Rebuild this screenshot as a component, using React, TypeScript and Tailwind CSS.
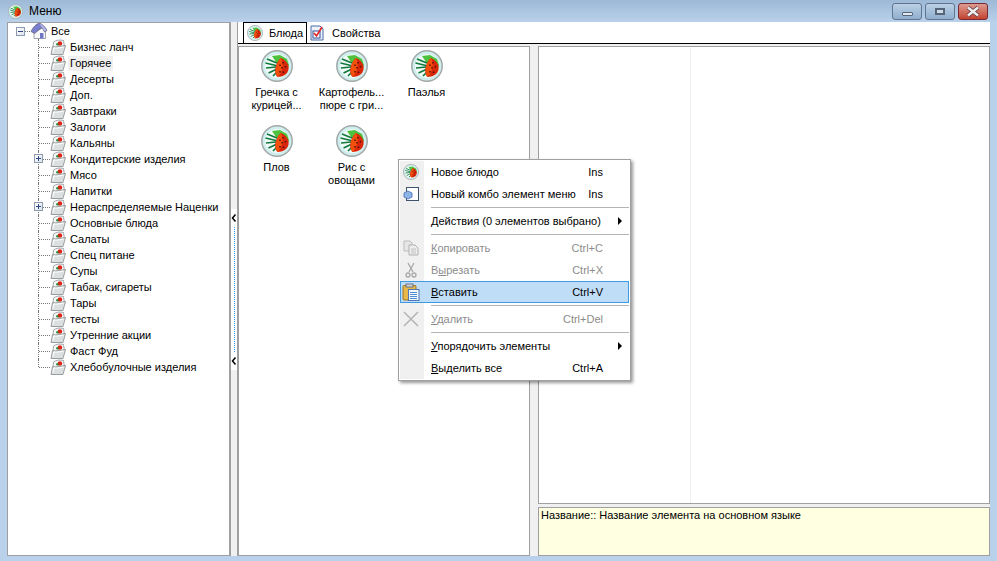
import React from 'react';

const treeItems = [
  { label: 'Бизнес ланч' },
  { label: 'Горячее', hovered: true },
  { label: 'Десерты' },
  { label: 'Доп.' },
  { label: 'Завтраки' },
  { label: 'Залоги' },
  { label: 'Кальяны' },
  { label: 'Кондитерские изделия', expandable: true },
  { label: 'Мясо' },
  { label: 'Напитки' },
  { label: 'Нераспределяемые Наценки', expandable: true },
  { label: 'Основные блюда' },
  { label: 'Салаты' },
  { label: 'Спец питане' },
  { label: 'Супы' },
  { label: 'Табак, сигареты' },
  { label: 'Тары' },
  { label: 'тесты' },
  { label: 'Утренние акции' },
  { label: 'Фаст Фуд' },
  { label: 'Хлебобулочные изделия' },
];

const dishes = [
  ['Гречка с', 'курицей...'],
  ['Картофель...', 'пюре с гри...'],
  ['Паэлья'],
  ['Плов'],
  ['Рис с', 'овощами'],
];

const PlateIcon = ({ size = 32 }: { size?: number }) => (
  <svg width={size} height={size} viewBox="0 0 32 32" className="shrink-0">
    <circle cx="16" cy="16" r="15.2" fill="#cfeeee" stroke="#a3a8a8" strokeWidth="1.5" />
    <circle cx="16" cy="16" r="12" fill="#f1faf9" />
    <path d="M11 6 L19 5 L26 9 L28 15 L26 20 L17 15 Z" fill="#4ec23f" />
    <path d="M6 9 L16 13 M4.5 13 L15 15.5 M5 18 L15 17 M7.5 23 L16 19 M12 26 L17 21" stroke="#0f7a3a" strokeWidth="1.7" />
    <path d="M20 8 C27 11 29 17 27 21 C25.5 25 22 26.5 16.5 27 C12.5 23 14 13 20 8 Z" fill="#d9260b" />
    <path d="M20 8 C23 13 22 22 16.5 27 C13 23.5 14.5 13 20 8 Z" fill="#f4500c" />
    <path d="M22 12 v1.4 M24.5 16 v1.4 M21 17 v1.4 M22.5 21.5 v1.4 M19 21 v1.4 M19 14.5 v1.4" stroke="#4a0f06" strokeWidth="1.4" />
  </svg>
);

const FolderIcon = () => (
  <svg width="16" height="16" viewBox="0 0 16 16" className="shrink-0">
    <path d="M2.5 12 L3.5 3 C6 1 10.5 0.5 13.5 1.5 L14.5 8 L12 12 Z" fill="#f7f8f8" stroke="#8c9094" strokeWidth="0.8" />
    <path d="M5.5 5 L9 3 V6.5 Z" fill="#2c9a3a" />
    <circle cx="10" cy="4.5" r="2.2" fill="#e0241a" />
    <path d="M6 5.8 H9" stroke="#1f7a30" strokeWidth="0.9" />
    <path d="M1 15.5 L2.5 7.5 C6 8.5 10 7.2 15.5 6.5 L13 15.5 Z" fill="#dcdfe0" stroke="#85898c" strokeWidth="0.8" />
    <path d="M3 13.5 L3.8 9 C7 9.6 10 8.6 13.6 8.1" fill="none" stroke="#ffffff" strokeWidth="1" />
  </svg>
);

const HomeIcon = () => (
  <svg width="18" height="18" viewBox="0 0 18 18" className="shrink-0">
    <path d="M4 9 L13 6 L15.5 9 V16.5 H4 Z" fill="#f8f8fb" stroke="#8a8a92" strokeWidth="0.8" />
    <path d="M1 9.5 C3 5 6 2 9.5 1 C12.5 2.5 15.5 5 17 8.5 L14.5 10 L12 5.5 L4.5 11.5 Z" fill="#7a80cf" stroke="#5f5f70" strokeWidth="0.7" />
    <path d="M9.5 1.5 C12.5 3 15 5.5 16.5 8.3 L14.7 9.4 L11.8 5.2 Z" fill="#b4b8ea" />
    <path d="M10 11 H13.5 V16.5 H10 Z" fill="#6f76c6" />
  </svg>
);

const TreeToggle = ({ minus }: { minus?: boolean }) => (
  <div className="flex h-[9px] w-[9px] items-center justify-center border border-[#8a9bb0] bg-gradient-to-br from-white to-[#dfe3ea]">
    <div className="relative h-px w-[5px] bg-[#30468c]">
      {!minus && <div className="absolute left-[2px] top-[-2px] h-[5px] w-px bg-[#30468c]" />}
    </div>
  </div>
);

const TreeRow = ({ label, hovered, expandable, last }: { label: string; hovered?: boolean; expandable?: boolean; last?: boolean }) => (
  <div className="flex h-4 items-center">
    <div className={`ml-[30px] w-px border-l border-dotted border-[#777] ${last ? 'h-2 self-start' : 'h-full'}`} />
    <div className="relative flex h-full w-[11px] items-center">
      <div className="w-full border-t border-dotted border-[#777]" />
      {expandable && (
        <div className="absolute left-[-5px] top-[3px]">
          <TreeToggle />
        </div>
      )}
    </div>
    <FolderIcon />
    <span className={`ml-[2px] whitespace-nowrap px-[2px] leading-[15px] ${hovered ? 'bg-[#f0f0f0]' : ''}`}>{label}</span>
  </div>
);

const TreePanel = () => (
  <div className="w-[223px] shrink-0 border border-[#a0a0a0] bg-white">
    <div className="flex h-4 items-center">
      <div className="ml-2">
        <TreeToggle minus />
      </div>
      <div className="w-[5px] border-t border-dotted border-[#777]" />
      <HomeIcon />
      <span className="ml-px px-[2px]">Все</span>
    </div>
    {treeItems.map((item, i) => (
      <TreeRow key={item.label} {...item} last={i === treeItems.length - 1} />
    ))}
  </div>
);

const SplitArrow = () => (
  <svg width="6" height="8" viewBox="0 0 6 8" className="my-[5px] shrink-0">
    <path d="M4.5 0.5 L1.5 4 L4.5 7.5" fill="none" stroke="#000" strokeWidth="1.5" />
  </svg>
);

const Splitter = () => (
  <div className="flex w-2 shrink-0 flex-col border-x border-[#a0a0a0] bg-[#f0f0f0] pt-[187px]">
    <div className="flex h-[161px] flex-col items-center bg-white">
      <SplitArrow />
      <div className="flex-1 self-start ml-[3px] border-l border-dotted border-[#3399ff]" />
      <SplitArrow />
    </div>
  </div>
);

const TabBar = () => (
  <div className="flex h-[22px] items-end border-b border-black bg-white pl-[5px]">
    <div className="flex h-[21px] w-[64px] items-center gap-[6px] border-x border-t border-black bg-white pl-[3px]">
      <PlateIcon size={16} />
      <span className="pt-px">Блюда</span>
    </div>
    <div className="ml-[2px] flex h-[21px] items-center gap-2 pl-px">
      <svg width="14" height="16" viewBox="0 0 14 16">
        <path d="M1 1 H10 L13 4 V15 H1 Z" fill="#eef3fb" stroke="#4a6aa8" />
        <rect x="3" y="6" width="7" height="7" fill="#fff" stroke="#2f4f95" />
        <path d="M4 8 L6.5 11 L12 2" fill="none" stroke="#e02020" strokeWidth="1.6" />
      </svg>
      <span className="pt-px">Свойства</span>
    </div>
  </div>
);

const DishGrid = () => (
  <div className="flex-1 border border-[#a0a0a0] bg-white">
    <div className="grid grid-cols-[repeat(3,75px)] auto-rows-[75px] pt-[3px]">
      {dishes.map((lines) => (
        <div key={lines[0]} className="flex flex-col items-center">
          <PlateIcon />
          <div className="mt-[4px] text-center leading-[13px]">
            {lines.map((line) => (
              <div key={line} className="whitespace-nowrap">{line}</div>
            ))}
          </div>
        </div>
      ))}
    </div>
  </div>
);

const PropertyPanel = () => (
  <div className="flex min-w-0 flex-1 flex-col">
    <div className="flex flex-1 border border-[#a0a0a0] bg-white">
      <div className="w-[152px] border-r border-[#f0f0f0]" />
    </div>
    <div className="mt-[3px] h-[49px] shrink-0 border border-[#a0a0a0] bg-[#ffffe1] pl-[2px] leading-[15px]">
      Название:: Название элемента на основном языке
    </div>
  </div>
);

const ContextMenu = () => {
  const Item = ({ label, shortcut, icon, disabled, active, arrow }: { label: React.ReactNode; shortcut?: string; icon?: React.ReactNode; disabled?: boolean; active?: boolean; arrow?: boolean }) => (
    <div className={`flex h-[22px] items-center border ${active ? 'border-[#3d9ae0] bg-[#c0ddf8]' : 'border-transparent'} ${disabled ? 'text-[#8c8c8c]' : ''}`}>
      <div className="flex w-[20px] shrink-0 justify-center">{icon}</div>
      <span className="ml-[10px] flex-1 whitespace-nowrap">{label}</span>
      {shortcut && <span className="whitespace-nowrap">{shortcut}</span>}
      <div className="flex w-[25px] shrink-0 justify-end pr-[6px]">
        {arrow && <div className="h-0 w-0 border-y-[4px] border-l-[4px] border-y-transparent border-l-black" />}
      </div>
    </div>
  );
  const Sep = () => (
    <div className="flex h-[5px] items-center pl-[31px]">
      <div className="w-full border-t border-[#b4b4b4]" />
    </div>
  );
  return (
    <div className="absolute left-[398px] top-[159px] w-[233px] border border-[#a0a0a0] bg-white p-px shadow-[2px_2px_3px_rgba(0,0,0,0.4)]">
      <div className="absolute bottom-px left-px top-px w-[24px] bg-[#f0f0f0]" />
      <div className="relative">
        <Item label="Новое блюдо" shortcut="Ins" icon={<PlateIcon size={16} />} />
        <Item
          label="Новый комбо элемент меню"
          shortcut="Ins"
          icon={
            <svg width="16" height="16" viewBox="0 0 16 16">
              <rect x="3.5" y="1.5" width="12" height="13" fill="#fff" stroke="#40536b" />
              <path d="M5 5 L9 7 V11 L5 13 L1 11 V7 Z" fill="#8fb4e8" stroke="#3f6bb0" strokeWidth="0.8" />
            </svg>
          }
        />
        <Sep />
        <Item label="Действия (0 элементов выбрано)" arrow />
        <Sep />
        <Item
          disabled
          label={<><u>К</u>опировать</>}
          shortcut="Ctrl+C"
          icon={
            <svg width="16" height="16" viewBox="0 0 16 16">
              <path d="M1 1 H7 L9 3 V11 H1 Z" fill="#e6e6e6" stroke="#bcbcbc" />
              <path d="M6 5 H12 L15 8 V15 H6 Z" fill="#eeeeee" stroke="#b0b0b0" />
              <path d="M8 9 H13 M8 11 H13 M8 13 H13" stroke="#c0c0c0" />
            </svg>
          }
        />
        <Item
          disabled
          label={<>В<u>ы</u>резать</>}
          shortcut="Ctrl+X"
          icon={
            <svg width="16" height="16" viewBox="0 0 16 16" fill="none" stroke="#a8a8a8" strokeWidth="1.3">
              <path d="M5 1 L10 10 M11 1 L6 10" />
              <circle cx="5" cy="13" r="2" />
              <circle cx="11" cy="13" r="2" />
            </svg>
          }
        />
        <Item
          active
          label={<><u>В</u>ставить</>}
          shortcut="Ctrl+V"
          icon={
            <svg width="18" height="18" viewBox="0 0 18 18">
              <rect x="1" y="2.5" width="13" height="14.5" rx="1" fill="#e8b94a" stroke="#9a7420" />
              <rect x="4" y="1" width="7" height="3" fill="#d0d4da" stroke="#6b7280" />
              <rect x="6.5" y="6.5" width="10.5" height="11" fill="#f4f8fd" stroke="#4d78b5" />
              <path d="M8 9.5 H15 M8 11.5 H15 M8 13.5 H15 M8 15.5 H15" stroke="#4d8fd6" />
            </svg>
          }
        />
        <Sep />
        <Item
          disabled
          label={<><u>У</u>далить</>}
          shortcut="Ctrl+Del"
          icon={
            <svg width="16" height="16" viewBox="0 0 16 16" stroke="#b4b4b4" strokeWidth="1.5">
              <path d="M1 1 L15 15 M15 1 L1 15" />
            </svg>
          }
        />
        <Sep />
        <Item label={<><u>У</u>порядочить элементы</>} arrow />
        <Item label={<><u>В</u>ыделить все</>} shortcut="Ctrl+A" />
      </div>
    </div>
  );
};

const CaptionButton = ({ children, close }: { children: React.ReactNode; close?: boolean }) => (
  <div className={`flex h-[17px] w-[30px] items-center justify-center rounded-[3px] border ${close ? 'border-[#7a2a35] bg-gradient-to-b from-[#dc9a90] to-[#c2412d]' : 'border-[#5f7590] bg-gradient-to-b from-[#bcd0e6] to-[#90aecd]'}`}>
    {children}
  </div>
);

export default function App() {
  return (
    <div className="relative flex h-[561px] w-[997px] flex-col overflow-hidden bg-[#b9d1ea] font-['Liberation_Sans',sans-serif] text-[11px] text-black">
      <div className="flex h-[22px] shrink-0 items-center bg-gradient-to-b from-[#9db9d6] to-[#b9d1ea] pl-2 pr-[9px]">
        <PlateIcon size={15} />
        <span className="ml-[6px] flex-1 text-[12px]">Меню</span>
        <div className="flex gap-[3px]">
          <CaptionButton>
            <div className="mt-[6px] h-[4px] w-[11px] rounded-[1px] border border-[#55657a] bg-[#e4e8ec]" />
          </CaptionButton>
          <CaptionButton>
            <div className="h-[7px] w-[10px] border-2 border-[#55657a] bg-[#cfdbe8]" />
          </CaptionButton>
          <CaptionButton close>
            <svg width="16" height="11" viewBox="0 0 16 11">
              <path d="M3 1.5 L13 9.5 M13 1.5 L3 9.5" stroke="#55303a" strokeWidth="4" />
              <path d="M3 1.5 L13 9.5 M13 1.5 L3 9.5" stroke="#eeeeee" strokeWidth="2.6" />
            </svg>
          </CaptionButton>
        </div>
      </div>
      <div className="mx-[7px] mb-[5px] flex min-h-0 flex-1 bg-[#f0f0f0]">
        <TreePanel />
        <Splitter />
        <div className="flex min-w-0 flex-1 flex-col">
          <TabBar />
          <div className="flex min-h-0 flex-1 gap-2 pt-[2px]">
            <div className="flex w-[292px] shrink-0 flex-col">
              <DishGrid />
            </div>
            <PropertyPanel />
          </div>
        </div>
      </div>
      <ContextMenu />
    </div>
  );
}
